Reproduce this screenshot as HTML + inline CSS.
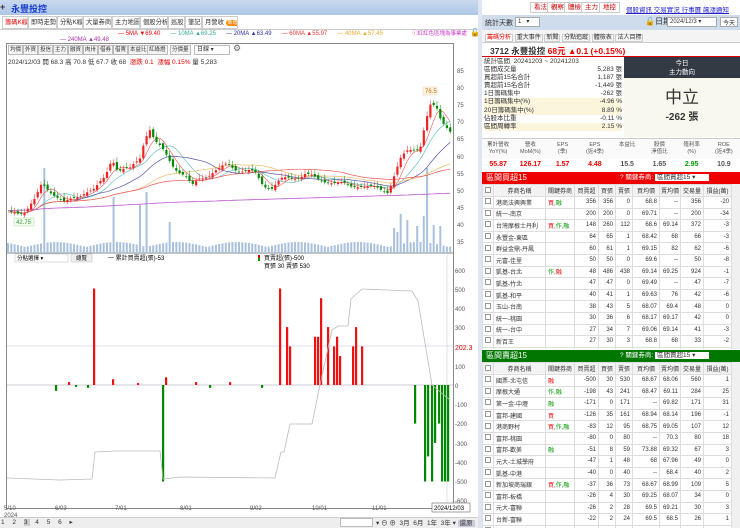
<!DOCTYPE html>
<html><head><meta charset="utf-8"><style>
*{margin:0;padding:0;box-sizing:border-box}
body{width:740px;height:528px;overflow:hidden;background:#fff;font-family:"Liberation Sans","Noto Sans CJK TC",sans-serif;font-size:7px;color:#333;position:relative}
.a{position:absolute}
.tab{position:absolute;top:16px;height:13px;border:1px solid #ccc;background:#fff;font-size:6.3px;line-height:11px;padding:0 2px;white-space:nowrap;overflow:hidden}
.btn{position:absolute;top:45px;height:10px;border:1px solid #bbb;background:#f4f4f4;font-size:5.5px;line-height:8px;padding:0 1px;white-space:nowrap}
table{border-collapse:collapse;font-size:6px}
td{border:1px solid #ddd;height:11.6px;padding:0 2px;text-align:right;white-space:nowrap;overflow:hidden}
td.n{text-align:left}
th{border:1px solid #ddd;background:#f3f3f3;font-weight:normal;height:12px;font-size:6px;white-space:nowrap;overflow:hidden}
.cb{display:inline-block;width:6px;height:6px;border:1px solid #999;background:#fff}
.r{color:#e00}.g{color:#090}
.rb{position:absolute;top:2px;height:11px;border:1px solid #ccc;background:#fff;color:#c00;font-size:6.5px;line-height:9px;padding:0 3px}
</style></head><body>
<div class="a" style="left:0;top:0;width:478px;height:15px;background:linear-gradient(#c9d9ef,#aec6e6)"></div>
<div class="a" style="left:0;top:2px;font-size:9px;font-weight:bold">+</div>
<div class="a" style="left:11px;top:2px;font-size:9px;color:#1a3fd0;font-weight:bold">永豐投控</div>
<div class="tab" style="left:2px;width:26px;color:#d00">籌碼K線</div>
<div class="tab" style="left:28px;width:29px">即時走勢</div>
<div class="tab" style="left:57px;width:26px">分點K線</div>
<div class="tab" style="left:83px;width:29px">大量券商</div>
<div class="tab" style="left:112px;width:28px">主力地圖</div>
<div class="tab" style="left:140px;width:28px">個股分析</div>
<div class="tab" style="left:168px;width:17px">巡股</div>
<div class="tab" style="left:185px;width:17px">筆記</div>
<div class="tab" style="left:202px;width:36px">月營收 <span style="background:#f80;color:#fff;border-radius:4px;padding:0 2px;font-size:5px">新增</span></div>
<div class="a" style="left:0;top:29px;width:478px;height:1px;background:#ccc"></div>
<div class="a" style="top:31px;left:118px;font-size:6px;white-space:nowrap"><span class="r">— 5MA ▼69.40</span>&nbsp;&nbsp;&nbsp;&nbsp;&nbsp;&nbsp;<span style="color:#3a9">— 10MA ▲69.25</span>&nbsp;&nbsp;&nbsp;&nbsp;&nbsp;&nbsp;<span style="color:#33a">— 20MA ▲63.49</span>&nbsp;&nbsp;&nbsp;&nbsp;&nbsp;&nbsp;<span style="color:#e33">— 60MA ▲55.97</span>&nbsp;&nbsp;&nbsp;&nbsp;&nbsp;&nbsp;<span style="color:#ea3">— 40MA ▲57.45</span></div>
<div class="a" style="top:37px;left:60px;font-size:6px;color:#a3a">— 240MA ▲49.48</div>
<div class="a" style="top:29px;left:412px;font-size:5.5px;color:#c3c">ⓘ紅紅色區塊為事業處</div>
<div class="a" style="top:28px;left:470px;font-size:8px">🔓</div>
<div class="a" style="left:6px;top:43px;width:448px;height:466px;border:1px solid #888"></div>
<div class="btn" style="left:8px">均價</div><div class="btn" style="left:23px">外資</div><div class="btn" style="left:38px">投信</div><div class="btn" style="left:53px">主力</div><div class="btn" style="left:68px">融資</div><div class="btn" style="left:83px">肉卅</div><div class="btn" style="left:98px">借券</div><div class="btn" style="left:113px">借賣</div><div class="btn" style="left:128px">本益比</div><div class="btn" style="left:147px">紅綠燈</div><div class="btn" style="left:170px">分價量</div>
<div class="a" style="left:194px;top:45px;width:36px;height:10px;border:1px solid #bbb;font-size:6px;line-height:8px;padding-left:2px">日線 ▾</div>
<div class="a" style="left:233px;top:43px;font-size:9px;color:#666">⚙</div>
<div class="a" style="left:8px;top:56px;font-size:6.5px;white-space:nowrap">2024/12/03 開 68.3 高 70.8 低 67.7 收 68 &nbsp;<span class="r">漲跌 0.1 &nbsp;漲幅 0.15%</span> 量 5,283</div>
<svg class="a" style="left:0;top:0" width="480" height="528">
<g font-size="6" fill="#555">
<text x="457" y="73">85</text><text x="457" y="90">80</text><text x="457" y="107">75</text><text x="457" y="124">70</text><text x="457" y="141">65</text><text x="457" y="159">60</text><text x="457" y="176">55</text><text x="457" y="193">50</text><text x="457" y="210">45</text><text x="457" y="227">40</text><text x="457" y="244">35</text>
<text x="455" y="273">600</text><text x="455" y="292">500</text><text x="455" y="311">400</text><text x="455" y="330">300</text><text x="455" y="369">100</text><text x="455" y="388">0</text><text x="455" y="407">-100</text><text x="455" y="426">-200</text><text x="455" y="446">-300</text><text x="455" y="465">-400</text><text x="455" y="484">-500</text><text x="455" y="503">-600</text>
<text x="455" y="350" fill="#d00" font-size="7">202.3</text>
<text x="4" y="510">5/10</text><text x="4" y="517">2024</text><text x="55" y="510">6/03</text><text x="115" y="510">7/01</text><text x="180" y="510">8/01</text><text x="250" y="510">9/02</text><text x="312" y="510">10/01</text><text x="372" y="510">11/01</text>
</g>
<line x1="7" y1="253" x2="453" y2="253" stroke="#888"/>
<line x1="7" y1="346" x2="453" y2="346" stroke="#bbd" stroke-width=".6"/>
<line x1="7" y1="385" x2="453" y2="385" stroke="#99a" stroke-width=".6"/>
<line x1="447" y1="253" x2="447" y2="509" stroke="#ccd" stroke-width=".6"/>
<rect x="432" y="503" width="38" height="9" fill="#fff" stroke="#666" stroke-width=".6"/><text x="434" y="510" font-size="6">2024/12/03</text>
<rect x="423" y="87" width="14" height="8" fill="#fff8e8" stroke="#eca" stroke-width=".5"/><text x="425" y="93" font-size="6" fill="#c60">76.5</text>
<rect x="14" y="218" width="20" height="8" fill="#f3fff0" stroke="#ad9" stroke-width=".5"/><text x="16" y="224" font-size="6" fill="#393">42.75</text>
<rect x="15" y="254" width="53" height="8" fill="#fff" stroke="#bbb" stroke-width=".5"/><text x="17" y="260" font-size="5.5">分點選擇 ▾</text>
<rect x="71" y="254" width="21" height="8" fill="#eee" stroke="#bbb" stroke-width=".5"/><text x="76" y="260" font-size="5.5">總覽</text>
<text x="108" y="260" font-size="6">一 累計買賣超(張)-53</text>
<rect x="258" y="255" width="2" height="3" fill="#d00"/><rect x="258" y="258" width="2" height="3" fill="#090"/>
<text x="264" y="260" font-size="6">買賣超(張)-500</text><text x="264" y="268" font-size="6">買張 30 賣張 530</text>
<g id="dyn"></g>
</svg>
<div class="a" style="left:0;top:517px;width:478px;height:11px;background:#eee;border-top:1px solid #ccc"></div>
<div class="a" style="left:1px;top:518px;font-size:6.5px;white-space:nowrap;letter-spacing:3px">1 2 <span style="background:#ccc">3</span> 4 5 6 ▸</div>
<div class="a" style="left:340px;top:518px;width:33px;height:9px;border:1px solid #bbb;background:#fff"></div>
<div class="a" style="left:376px;top:517px;font-size:6.5px;white-space:nowrap">▾ ⊖ ⊕ &nbsp;3月 &nbsp;6月 &nbsp;1年 &nbsp;3年 ▾ <span style="background:#ccd;padding:0 2px">還原</span></div>
<div class="a" style="left:478px;top:0;width:4px;height:528px;background:#dfe6ef"></div>

<div class="rb" style="left:530px">看法</div><div class="rb" style="left:547px">觀察</div><div class="rb" style="left:564px">體檢</div><div class="rb" style="left:581px">主力</div><div class="rb" style="left:599px">地控</div>
<div class="a" style="left:626px;top:4px;font-size:6.5px;color:#22c;text-decoration:underline;white-space:nowrap">個股資訊 交易實況 行事曆 飆漲通知</div>
<div class="a" style="left:482px;top:15px;width:258px;height:15px;background:#cfdcec"></div>
<div class="a" style="left:485px;top:18px;font-size:7px">統計天數</div>
<div class="a" style="left:515px;top:17px;width:25px;height:10px;background:#fff;border:1px solid #aaa;font-size:6px;padding-left:2px">1 &nbsp;&nbsp;▾</div>
<div class="a" style="left:645px;top:16px;font-size:8px">🔓日期</div>
<div class="a" style="left:667px;top:17px;width:50px;height:10px;background:#fff;border:1px solid #aaa;font-size:6px;padding-left:2px;white-space:nowrap">2024/12/3 ▾</div>
<div class="a" style="left:720px;top:17px;width:18px;height:10px;background:#fff;border:1px solid #aaa;font-size:6px;padding-left:2px">今天</div>
<div class="a" style="left:482px;top:30px;width:258px;height:13px;background:#f4f4f4;border-bottom:1px solid #ccc"></div>
<div class="a" style="left:485px;top:32px;font-size:6px;white-space:nowrap"><span class="r" style="border:1px solid #ccc;background:#fff;padding:0 1px">籌碼分析</span> <span style="border:1px solid #ccc;padding:0 1px">重大事件</span> <span style="border:1px solid #ccc;padding:0 1px">新聞</span> <span style="border:1px solid #ccc;padding:0 1px">分點追蹤</span> <span style="border:1px solid #ccc;padding:0 1px">體檢表</span> <span style="border:1px solid #ccc;padding:0 1px">法人目標</span></div>
<div class="a" style="left:482px;top:43px;width:258px;height:14px;border-bottom:1.5px solid #d00"></div>
<div class="a" style="left:490px;top:45px;font-size:8.5px;font-weight:bold;white-space:nowrap">3712 永豐投控 <span class="r">68元 ▲0.1 (+0.15%)</span></div>
<div class="a" style="left:484px;top:58px;width:138px;font-size:6.5px;line-height:8.1px">
<div>統計區間 &nbsp;20241203 ~ 20241203</div>
<div>區間成交量<span style="float:right">5,283 張</span></div>
<div>買超前15名合計<span style="float:right">1,187 張</span></div>
<div>賣超前15名合計<span style="float:right">-1,449 張</span></div>
<div>1日籌碼集中<span style="float:right">-262 張</span></div>
<div style="background:#fbf5dc">1日籌碼集中(%)<span style="float:right">-4.96 %</span></div>
<div style="background:#fbf5dc">20日籌碼集中(%)<span style="float:right">8.89 %</span></div>
<div>佔股本比重<span style="float:right">-0.11 %</span></div>
<div style="background:#fbf5dc">區間周轉率<span style="float:right">2.15 %</span></div>
</div>
<div class="a" style="left:624px;top:57px;width:116px;height:21px;background:#333a44;color:#fff;text-align:center;font-size:6.5px;line-height:9px;padding-top:2px">今日<br>主力動向</div>
<div class="a" style="left:624px;top:78px;width:116px;height:59px;background:#f8f8ee;text-align:center"><div style="font-size:17px;margin-top:5px;color:#333">中立</div><div style="font-size:10px;font-weight:bold">-262 張</div></div>
<div class="a" style="left:482px;top:138px;width:258px;height:34px;border-top:1px solid #ccc;font-size:5.5px;color:#555">
<div style="display:flex;height:20px;background:#fafafa;text-align:center;line-height:7px;padding-top:3px"><div style="flex:1">累計營收<br>YoY(%)</div><div style="flex:1">營收<br>MoM(%)</div><div style="flex:1">EPS<br>(季)</div><div style="flex:1">EPS<br>(近4季)</div><div style="flex:1">本益比</div><div style="flex:1">股價<br>淨值比</div><div style="flex:1">殖利率<br>(%)</div><div style="flex:1">ROE<br>(近4季)</div></div>
<div style="display:flex;height:12px;text-align:center;line-height:12px;font-size:7px;font-weight:bold"><div style="flex:1" class="r">55.87</div><div style="flex:1" class="r">126.17</div><div style="flex:1" class="r">1.57</div><div style="flex:1" class="r">4.48</div><div style="flex:1">15.5</div><div style="flex:1">1.65</div><div style="flex:1" class="g">2.95</div><div style="flex:1">10.9</div></div>
</div>
<div class="a" style="left:482px;top:172px;width:258px;height:12px;background:#e00;color:#fff;font-size:8px;line-height:12px;padding-left:4px">區間買超15<span style="position:absolute;left:138px;font-size:6.5px;white-space:nowrap">? 關鍵券商: <span style="background:#fff;color:#333;padding:0 14px 0 2px">區間買超15 ▾</span></span></div>
<div class="a" style="left:482px;top:184px;width:258px;height:165px;overflow:hidden" id="t1"></div>
<div class="a" style="left:482px;top:350px;width:258px;height:12px;background:#070;color:#fff;font-size:8px;line-height:12px;padding-left:4px">區間賣超15<span style="position:absolute;left:138px;font-size:6.5px;white-space:nowrap">? 關鍵券商: <span style="background:#fff;color:#333;padding:0 14px 0 2px">區間賣超15 ▾</span></span></div>
<div class="a" style="left:482px;top:362px;width:258px;height:166px;overflow:hidden" id="t2"></div>
<div class="a" style="left:731px;top:184px;width:9px;height:165px;background:#f0f0f0;border-left:1px solid #ddd"></div>
<div class="a" style="left:731px;top:362px;width:9px;height:166px;background:#f0f0f0;border-left:1px solid #ddd"></div>
<script>
(function(){
var W=[11,52,29,24,17,17,27,21,23,28];
var H='<th><span class="cb"></span></th><th>券商名稱</th><th>關鍵券商</th><th>買賣超</th><th>買張</th><th>賣張</th><th>買均價</th><th>賣均價</th><th>交易量</th><th>損益(萬)</th>';
function tb(id,rows){var s='<table style="width:249px;table-layout:fixed"><colgroup>'+W.map(function(w){return '<col style="width:'+w+'px">'}).join('')+'</colgroup><tr>'+H+'</tr>';
rows.forEach(function(r){s+='<tr style="background:'+(r[10]||'#fff')+'"><td style="text-align:center"><span class="cb"></span></td><td class="n">'+r[0]+'</td><td class="n">'+r[1]+'</td>';for(var i=2;i<10;i++)s+='<td>'+r[i]+'</td>';s+='</tr>'});
document.getElementById(id).innerHTML=s+'</table>';}
var G='#eef8ea',PK='#fce8ea';
tb('t1',[['港商法興興業','<span class=r>買</span>,<span class=g>融</span>',356,356,0,68.8,'--',356,-20,G],['統一-南京','',200,200,0,69.71,'--',200,-34],['台灣摩根士丹利','<span class=r>買</span>,<span class=g>作</span>,<span class=g>融</span>',148,260,112,68.6,69.14,372,-3,G],['永豐金-東區','',64,65,1,68.42,68,66,-3],['群益金鼎-丹鳳','',60,61,1,69.15,82,62,-6],['元富-佳里','',50,50,0,69.6,'--',50,-8],['凱基-台北','<span class=g>作</span>,<span class=r>融</span>',48,486,438,69.14,69.25,924,-1,PK],['凱基-竹北','',47,47,0,69.49,'--',47,-7],['凱基-和平','',40,41,1,69.63,76,42,-6],['玉山-台南','',38,43,5,68.07,69.4,48,0],['統一-桃園','',30,36,6,68.17,69.17,42,0],['統一-台中','',27,34,7,69.06,69.14,41,-3],['新百王','',27,30,3,68.8,68,33,-2],['','',22,25,3,69,68,28,1]]);
tb('t2',[['國票-北屯信','<span class=r>融</span>',-500,30,530,68.67,68.06,560,1,PK],['摩根大通','<span class=g>作</span>,<span class=g>融</span>',-198,43,241,68.47,69.11,284,25,G],['第一金-中壢','<span class=g>融</span>','-171',0,171,'--',69.82,171,31],['富邦-建國','<span class=r>買</span>',-126,35,161,68.94,68.14,196,-1],['港商野村','<span class=r>買</span>,<span class=g>作</span>,<span class=g>融</span>',-83,12,95,68.75,69.05,107,12,G],['富邦-桃園','',-80,0,80,'--',70.3,80,18],['富邦-歡美','<span class=g>融</span>',-51,8,59,73.88,69.32,67,3,G],['元大-土城學府','',-47,1,48,68,67.96,49,0],['凱基-中港','',-40,0,40,'--',68.4,40,2],['新加坡商瑞銀','<span class=r>買</span>,<span class=g>作</span>,<span class=g>融</span>',-37,36,73,68.67,68.99,109,5,G],['富邦-板橋','',-26,4,30,69.25,68.07,34,0],['元大-富聯','',-26,2,28,69.5,69.21,30,3],['台新-富聯','',-22,2,24,69.5,68.5,26,1],['','',-20,1,21,69,68.2,22,0]]);
var K=[[7,43],[15,44],[25,44],[35,47],[42,52],[47,51],[55,49],[65,46],[75,48],[85,50],[95,50],[105,54],[112,60],[118,56],[130,56],[140,60],[145,66],[150,68],[155,64],[165,61],[175,57],[185,54],[192,51],[200,54],[210,55],[220,56],[228,58],[240,56],[255,55],[263,52],[272,51],[282,53],[295,54],[305,55],[318,53],[330,53],[340,52],[350,51],[360,52],[370,51],[380,50],[388,50],[393,54],[400,59],[407,61],[415,62],[420,63],[425,70],[430,75],[436,74],[441,70],[446,69],[450,68]];
function P2(x){for(var i=0;i<K.length-1;i++)if(x<=K[i+1][0]){var t=(x-K[i][0])/(K[i+1][0]-K[i][0]);return K[i][1]+t*(K[i+1][1]-K[i][1])}return 68}
function Y(p){return 71+(85-p)*3.42}
var xs=[],cl=[],s='';for(var x=8;x<=451;x+=3.3){xs.push(x);cl.push(P2(x)+Math.sin(x*1.7)*0.8)}
function ma(n,c,w){var pts=[];for(var i=0;i<xs.length;i++){var a=0,k=0;for(var j=Math.max(0,i-n+1);j<=i;j++){a+=cl[j];k++}var v=a/k;if(n>60)v=45+(xs[i]-7)/443*4+(a/k-52)*0.1;pts.push(xs[i].toFixed(1)+','+Y(v).toFixed(1))}s+='<polyline points="'+pts.join(' ')+'" fill="none" stroke="'+c+'" stroke-width="'+w+'"/>'}
var spikes={45:168,113:197,148:192,427:168,140:205,400:214,407:220,423:216,398:232,170:222,145:208,395:228,418:226,435:225,440:226};
for(var i=0;i<xs.length;i++){var xx=xs[i],tp=247-Math.abs(Math.sin(xx*0.9))*5;for(var kk in spikes)if(Math.abs(xx-kk)<1.7)tp=spikes[kk];s+='<rect x="'+(xx-1).toFixed(1)+'" y="'+tp.toFixed(1)+'" width="2" height="'+(253-tp).toFixed(1)+'" fill="#a9c1dc"/>'}
ma(5,'#e55',0.6);ma(10,'#5bb',0.6);ma(20,'#55a',0.7);ma(40,'#eb6',0.7);ma(60,'#e55',0.7);ma(240,'#b5c',0.8);
for(var i=1;i<xs.length;i++){var o=cl[i-1]+Math.sin(i*2.3)*0.5,c=cl[i],up=c>=o,col=up?'#e22':'#080',hi=Math.max(o,c)+0.6+Math.abs(Math.sin(i))*0.8,lo=Math.min(o,c)-0.6;s+='<line x1="'+xs[i].toFixed(1)+'" x2="'+xs[i].toFixed(1)+'" y1="'+Y(hi).toFixed(1)+'" y2="'+Y(lo).toFixed(1)+'" stroke="'+col+'" stroke-width=".5"/><rect x="'+(xs[i]-1.1).toFixed(1)+'" y="'+Y(Math.max(o,c)).toFixed(1)+'" width="2.2" height="'+Math.max(0.8,Math.abs(o-c)*3.42).toFixed(1)+'" fill="'+col+'"/>'}
var B=[[94,500],[280,500],[287,300],[290,200],[315,250],[318,250],[321,450],[328,300],[334,200],[337,250],[340,150],[353,200],[356,300],[362,200],[163,-500],[415,-200],[425,-500],[428,-370],[432,-500],[435,-300],[439,-200],[442,-500],[445,-500],[448,-500],[56,-30],[69,15],[88,-15],[113,30],[166,40],[196,15],[210,-15],[230,15],[262,-15],[138,10],[76,-10]];
B.forEach(function(b){var h=b[1]*0.193;s+='<rect x="'+(b[0]-1)+'" y="'+(h>0?385-h:385)+'" width="2.2" height="'+Math.abs(h)+'" fill="'+(h>0?'#e11':'#080')+'"/>'});
s+='<polyline points="7,478 60,480 92,479 95,452 115,451 160,451 163,479 180,477 275,478 281,452 284,452 290,424 312,424 320,385 332,330 338,326 348,326 351,299 362,289 412,291 418,301 432,385 450,400" fill="none" stroke="#bbb" stroke-width=".8"/>';
document.getElementById('dyn').innerHTML=s;
})();
</script>
</body></html>
